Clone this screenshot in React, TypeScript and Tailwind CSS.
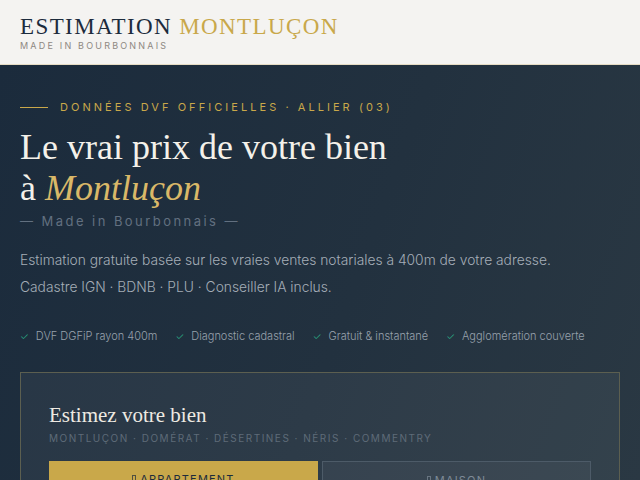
import React from "react";

const serif = { fontFamily: '"Liberation Serif", "DejaVu Serif", serif' };

function Check({ children }: { children: React.ReactNode }) {
  return (
    <span className="flex items-center gap-[7px]">
      <span className="text-[#2bb38b] text-[10px]">✓</span>
      <span>{children}</span>
    </span>
  );
}

function Tofu() {
  return <span className="inline-block w-[4px] h-[9px] border border-current mr-[4px] align-[-1px] opacity-70" />;
}

export default function App() {
  return (
    <div className="w-[640px] h-[480px] overflow-hidden" style={{ fontFamily: 'Inter, "Noto Sans", sans-serif' }}>
      <header className="h-[65px] bg-[#f4f3f1] border-b border-[#e6dcc4] px-[20px] pt-[13px]">
        <div className="text-[23px] leading-[27px] tracking-[1.4px]" style={serif}>
          <span className="text-[#1c2b3c]">ESTIMATION</span>{" "}
          <span className="text-[#c9a84a]">MONTLUÇON</span>
        </div>
        <div className="text-[9px] leading-[10px] tracking-[2.2px] text-[#8e8882] mt-[1px]">MADE IN BOURBONNAIS</div>
      </header>
      <main className="h-[415px] bg-[linear-gradient(110deg,#1b2b3c_0%,#22313f_55%,#2a3843_100%)] px-[20px] pt-[34px]">
        <div className="flex items-center gap-[12px]">
          <span className="w-[28px] h-px bg-[#c9a84a]" />
          <span className="text-[11px] tracking-[3.05px] text-[#c9a84a]">DONNÉES DVF OFFICIELLES · ALLIER (03)</span>
        </div>
        <h1 className="mt-[11px] text-[36px] leading-[41px] text-[#f4f1ea] font-light" style={serif}>
          Le vrai prix de votre bien
          <br />à <em className="text-[#d9b868]">Montluçon</em>
        </h1>
        <div className="mt-[3px] text-[13px] tracking-[2.45px] text-[#627080]">— Made in Bourbonnais —</div>
        <p className="mt-[16px] text-[13.8px] leading-[27px] text-[#a4adb7] font-light">
          Estimation gratuite basée sur les vraies ventes notariales à 400m de votre adresse.
          <br />
          Cadastre IGN · BDNB · PLU · Conseiller IA inclus.
        </p>
        <div className="mt-[27px] flex gap-[18px] text-[11px] text-[#97a1ac] font-light">
          <Check>DVF DGFiP rayon 400m</Check>
          <Check>Diagnostic cadastral</Check>
          <Check>Gratuit &amp; instantané</Check>
          <Check>Agglomération couverte</Check>
        </div>
        <section className="mt-[27px] border border-[#5c5f50] bg-[rgba(255,255,255,0.05)] px-[28px] pt-[28px] h-[140px]">
          <h2 className="text-[21px] leading-[28px] text-[#eeeae2]" style={serif}>Estimez votre bien</h2>
          <div className="mt-[2px] text-[10px] tracking-[1.5px] text-[#5e6b78]">MONTLUÇON · DOMÉRAT · DÉSERTINES · NÉRIS · COMMENTRY</div>
          <div className="mt-[15px] grid grid-cols-2 gap-[4px]">
            <button className="h-[40px] bg-[#c9a84a] text-[#1c2b3c] text-[11px] tracking-[1.2px] pt-[10px] flex justify-center">
              <span><Tofu />APPARTEMENT</span>
            </button>
            <button className="h-[40px] border border-[#4d5b68] bg-[rgba(255,255,255,0.04)] text-[#7e8a96] text-[11px] tracking-[1.2px] pt-[10px] flex justify-center">
              <span><Tofu />MAISON</span>
            </button>
          </div>
        </section>
      </main>
    </div>
  );
}
